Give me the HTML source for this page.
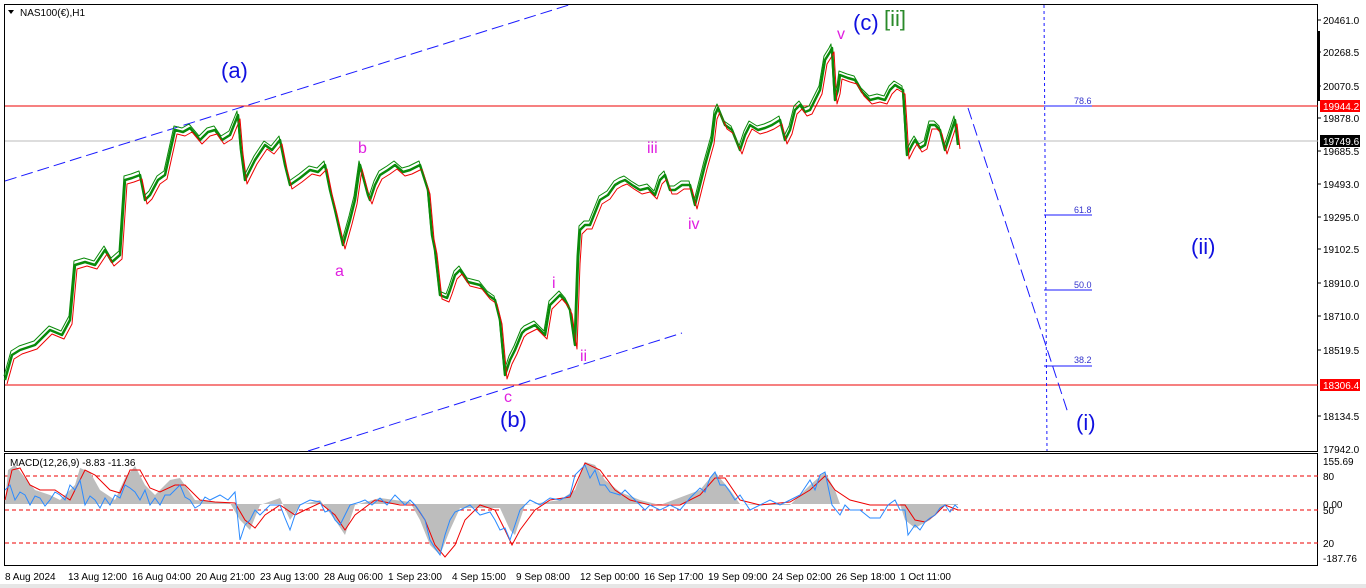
<!DOCTYPE html>
<html><head><meta charset="utf-8"><style>
html,body{margin:0;padding:0;background:#fff;width:1366px;height:588px;overflow:hidden}
svg{display:block;font-family:"Liberation Sans",sans-serif}
</style></head><body>
<svg width="1366" height="588" viewBox="0 0 1366 588" xmlns="http://www.w3.org/2000/svg">
<defs>
<polyline id="pr" points="5,380 12,355 20,350 35,345 50,330 62,335 70,320 75,265 85,262 95,265 105,250 112,262 120,255 125,180 132,178 140,175 145,200 150,195 158,180 165,175 175,130 183,132 190,128 200,140 208,132 215,130 222,140 230,135 238,115 241,150 245,180 250,170 255,160 265,145 272,150 280,140 285,165 290,185 300,178 310,170 318,172 325,165 330,190 335,210 343,245 350,220 355,200 360,165 368,195 370,200 375,185 380,175 388,170 395,165 403,172 410,170 420,165 428,190 432,235 435,250 440,295 447,298 450,290 455,275 460,270 468,282 480,285 488,295 495,300 500,320 505,375 510,360 515,350 522,333 525,330 535,325 540,330 545,335 550,305 560,295 566,302 570,310 575,345 578,260 580,230 585,225 590,225 596,210 600,200 608,195 615,185 620,182 625,180 632,185 640,190 648,188 655,195 660,180 665,175 670,190 675,190 682,185 690,185 695,205 700,185 705,165 712,140 715,115 718,108 725,125 732,130 740,150 745,135 750,125 758,130 765,128 772,125 780,120 785,140 790,130 795,110 800,105 805,112 810,110 815,100 820,90 825,60 830,52 832,48 835,100 838,90 840,75 848,78 855,80 862,92 870,100 878,98 885,100 890,90 895,85 900,88 903,90 905,120 907,155 912,145 915,140 920,148 925,145 930,125 935,125 940,130 945,150 950,135 955,120 958,145"/>
</defs>
<rect x="0" y="0" width="1366" height="588" fill="#fff"/>
<rect x="0" y="584" width="1366" height="4" fill="#e6e6e6"/>
<rect x="4.5" y="4.5" width="1313" height="447" fill="none" stroke="#000"/>
<rect x="4.5" y="453.5" width="1313" height="112" fill="none" stroke="#000"/>
<text x="20" y="16" font-size="10">NAS100(€),H1</text>
<path d="M8 10 l6 0 l-3 4z" fill="#000"/>
<line x1="5" y1="106" x2="1318" y2="106" stroke="#e00" stroke-width="1"/>
<line x1="5" y1="385" x2="1318" y2="385" stroke="#e00" stroke-width="1"/>
<line x1="5" y1="141" x2="1318" y2="141" stroke="#bbb" stroke-width="1"/>
<g stroke="#1a1aff" stroke-width="1" stroke-dasharray="12,5" fill="none">
<line x1="5" y1="181" x2="572" y2="4"/>
<line x1="308" y1="451" x2="682" y2="333"/>
<line x1="968" y1="108" x2="1068" y2="413"/>
</g>
<line x1="1044" y1="5" x2="1047" y2="451" stroke="#1a1aff" stroke-dasharray="3,3"/>
<g stroke="#1a1aff"><line x1="1044" y1="106" x2="1092" y2="106"/><line x1="1044" y1="215" x2="1092" y2="215"/><line x1="1044" y1="290" x2="1092" y2="290"/><line x1="1044" y1="366" x2="1092" y2="366"/></g>
<g font-size="9" fill="#33c"><text x="1074" y="104">78.6</text><text x="1074" y="213">61.8</text><text x="1074" y="288">50.0</text><text x="1074" y="363">38.2</text></g>
<use href="#pr" fill="none" stroke="#0a8a0a" stroke-width="2.5" stroke-linejoin="round"/>
<use href="#pr" fill="none" stroke="#e00" stroke-width="1" stroke-linejoin="round" transform="translate(2,4)"/>
<use href="#pr" fill="none" stroke="#0a8a0a" stroke-width="1" stroke-linejoin="round" transform="translate(-1,-4)"/>
<g font-size="10" fill="#000">
<text x="1323" y="24">20461.0</text><text x="1323" y="56">20268.5</text><text x="1323" y="90">20070.5</text><text x="1323" y="122">19878.0</text><text x="1323" y="155">19685.5</text><text x="1323" y="188">19493.0</text><text x="1323" y="221">19295.0</text><text x="1323" y="253">19102.5</text><text x="1323" y="287">18910.0</text><text x="1323" y="320">18710.0</text><text x="1323" y="354">18519.5</text><text x="1323" y="420">18134.5</text><text x="1323" y="453">17942.0</text>
</g>
<g stroke="#000"><line x1="1318" y1="20" x2="1321" y2="20"/><line x1="1318" y1="52" x2="1321" y2="52"/><line x1="1318" y1="86" x2="1321" y2="86"/><line x1="1318" y1="118" x2="1321" y2="118"/><line x1="1318" y1="151" x2="1321" y2="151"/><line x1="1318" y1="184" x2="1321" y2="184"/><line x1="1318" y1="217" x2="1321" y2="217"/><line x1="1318" y1="249" x2="1321" y2="249"/><line x1="1318" y1="283" x2="1321" y2="283"/><line x1="1318" y1="316" x2="1321" y2="316"/><line x1="1318" y1="350" x2="1321" y2="350"/><line x1="1318" y1="416" x2="1321" y2="416"/></g>
<rect x="1317" y="31" width="3" height="70" fill="#000"/>
<rect x="1320" y="100" width="40" height="12" fill="#f00"/><text x="1323" y="110" font-size="10" fill="#fff">19944.2</text>
<rect x="1320" y="135" width="40" height="12" fill="#000"/><text x="1323" y="145" font-size="10" fill="#fff">19749.6</text>
<rect x="1320" y="379" width="40" height="12" fill="#f00"/><text x="1323" y="389" font-size="10" fill="#fff">18306.4</text>
<g font-size="22" fill="#1010e0"><text x="221" y="78">(a)</text><text x="500" y="427">(b)</text><text x="853" y="30">(c)</text><text x="1191" y="254">(ii)</text><text x="1076" y="430">(i)</text></g>
<text x="884" y="26" font-size="22" fill="#2a8a2a">[ii]</text>
<g font-size="16" fill="#e020e0"><text x="335" y="276">a</text><text x="358" y="153">b</text><text x="504" y="402">c</text><text x="552" y="288">i</text><text x="580" y="361">ii</text><text x="647" y="153">iii</text><text x="688" y="229">iv</text><text x="837" y="39">v</text></g>
<text x="10" y="466" font-size="10" fill="#000">MACD(12,26,9) -8.83 -11.36</text>
<g stroke="#e00" stroke-dasharray="4,3"><line x1="5" y1="476" x2="1318" y2="476"/><line x1="5" y1="510" x2="1318" y2="510"/><line x1="5" y1="543" x2="1318" y2="543"/></g>
<polygon fill="#bdbdbd" points="5,504 8,470 15,465 25,478 35,490 50,495 60,500 75,485 80,468 90,472 100,490 115,500 125,478 135,466 145,485 155,495 170,480 180,478 195,500 230,503 240,520 250,530 260,505 280,498 290,520 300,505 320,500 335,520 345,535 355,505 380,498 410,502 420,520 430,545 440,555 450,530 460,508 500,508 510,530 515,535 525,505 560,500 575,490 585,462 595,465 605,480 620,492 640,500 660,505 700,490 715,472 730,490 740,504 760,505 790,505 810,485 825,472 835,490 840,504 900,504 905,520 915,528 930,520 945,505 958,505 958,504"/>
<polyline fill="none" stroke="#e00" stroke-width="1" points="5,500 12,470 20,468 30,485 40,490 55,490 70,500 85,470 95,475 110,490 120,493 130,470 140,470 150,488 160,492 175,485 185,485 200,500 215,502 235,503 245,520 255,528 265,515 280,505 295,515 305,510 320,503 335,515 345,530 355,515 375,500 400,505 415,505 425,520 435,545 445,557 455,545 465,520 480,505 495,510 505,530 512,545 520,530 535,510 550,500 570,497 585,463 600,470 615,490 630,500 650,505 680,505 700,495 715,478 725,478 740,500 760,505 790,502 810,490 825,476 835,490 850,500 870,505 890,505 905,505 915,520 925,522 935,515 945,505 958,510"/>
<polyline fill="none" stroke="#2a8aff" stroke-width="1" points="5,490 10,485 15,500 20,492 25,495 30,505 35,496 40,498 45,506 50,500 55,492 60,495 65,500 70,485 75,490 80,480 85,505 90,496 95,500 100,508 105,498 110,505 115,495 120,498 125,485 130,488 135,492 140,500 145,490 150,505 155,498 160,505 165,495 170,495 175,490 180,485 185,497 190,500 195,508 200,505 205,497 210,500 220,495 228,500 235,492 240,540 245,525 250,520 255,510 260,515 270,505 280,505 285,518 290,530 295,515 300,505 310,500 320,502 325,512 330,510 335,520 340,525 345,515 350,505 360,502 365,500 372,505 380,498 387,505 395,495 400,500 405,505 410,500 415,505 420,512 425,520 430,540 435,548 440,555 445,535 450,520 455,512 460,510 470,505 480,515 490,512 495,520 500,530 505,528 510,540 515,525 520,510 530,500 540,505 550,498 560,500 570,495 575,475 580,470 585,465 590,478 595,470 600,485 605,485 610,492 620,495 625,490 635,500 640,505 645,510 650,505 660,510 670,505 680,510 690,498 700,488 705,492 710,478 715,472 720,485 725,485 730,492 735,500 740,495 750,510 760,505 770,500 780,505 790,500 800,495 810,480 815,490 820,475 825,472 832,505 840,515 845,505 850,510 860,510 870,518 880,518 888,505 895,500 900,510 905,510 908,535 915,525 920,530 925,522 930,518 935,515 940,508 945,505 950,512 955,505 958,508"/>
<g font-size="10" fill="#000"><text x="1323" y="465">155.69</text><text x="1323" y="480">80</text><text x="1323" y="508">0.00</text><text x="1323" y="514">50</text><text x="1323" y="547">20</text><text x="1323" y="562">-187.76</text></g>
<g font-size="10" fill="#000">
<text x="5" y="580">8 Aug 2024</text><text x="68" y="580">13 Aug 12:00</text><text x="132" y="580">16 Aug 04:00</text><text x="196" y="580">20 Aug 21:00</text><text x="260" y="580">23 Aug 13:00</text><text x="324" y="580">28 Aug 06:00</text><text x="388" y="580">1 Sep 23:00</text><text x="452" y="580">4 Sep 15:00</text><text x="516" y="580">9 Sep 08:00</text><text x="580" y="580">12 Sep 00:00</text><text x="644" y="580">16 Sep 17:00</text><text x="708" y="580">19 Sep 09:00</text><text x="772" y="580">24 Sep 02:00</text><text x="836" y="580">26 Sep 18:00</text><text x="900" y="580">1 Oct 11:00</text>
</g>
</svg>
</body></html>
